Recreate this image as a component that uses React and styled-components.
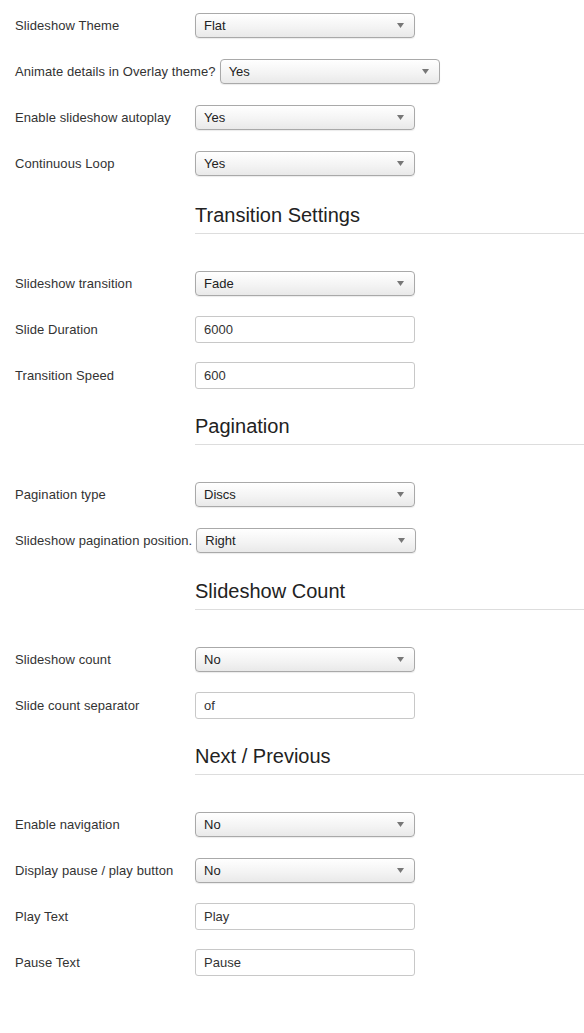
import styled, { createGlobalStyle } from "styled-components";

const GlobalStyle = createGlobalStyle`
  html, body {
    margin: 0;
    padding: 0;
    background: #fff;
  }
  body {
    font-family: "Liberation Sans", Arial, sans-serif;
    font-size: 13px;
    color: #333;
  }
`;

const Page = styled.div`
  padding: 2px 0 0 15px;
  min-height: 1031px;
`;

const Section = styled.section`
  margin-top: ${(p) => p.$offset || 0}px;
`;

const Row = styled.div`
  display: flex;
  align-items: center;
  gap: 4px;
  height: 46px;
`;

const Label = styled.label`
  min-width: 176px;
  font-size: 13px;
  letter-spacing: 0.08px;
  color: #333;
  white-space: nowrap;
`;

const SelectBox = styled.div`
  box-sizing: border-box;
  width: 220px;
  height: 25px;
  display: flex;
  align-items: center;
  justify-content: space-between;
  padding: 0 10px 0 8px;
  border: 1px solid #a9a9a9;
  border-radius: 4px;
  background: linear-gradient(#ffffff, #f3f3f3 60%, #e9e9e9);
  box-shadow: 0 1px 1px rgba(0, 0, 0, 0.08);
  color: #222;
  font-size: 13px;
`;

const TextInput = styled.input`
  box-sizing: border-box;
  width: 220px;
  height: 27px;
  padding: 0 8px;
  border: 1px solid #c8c8c8;
  border-radius: 3px;
  background: #fff;
  font-family: "Liberation Sans", Arial, sans-serif;
  font-size: 13px;
  color: #333;
  outline: none;
`;

const Heading = styled.h3`
  margin: 0 0 26px 180px;
  padding: 17px 0 6px;
  font-size: 20px;
  line-height: 23px;
  font-weight: normal;
  color: #222;
  border-bottom: 1px solid #dddddd;
`;

function Arrow() {
  return (
    <svg width="7" height="5" viewBox="0 0 7 5">
      <path d="M0 0 L7 0 L3.5 5 Z" fill="#777" />
    </svg>
  );
}

function Select({ value }) {
  return (
    <SelectBox>
      <span>{value}</span>
      <Arrow />
    </SelectBox>
  );
}

const sections = [
  {
    rows: [
      ["Slideshow Theme", "select", "Flat"],
      ["Animate details in Overlay theme?", "select", "Yes"],
      ["Enable slideshow autoplay", "select", "Yes"],
      ["Continuous Loop", "select", "Yes"],
    ],
  },
  {
    title: "Transition Settings",
    offset: 1,
    rows: [
      ["Slideshow transition", "select", "Fade"],
      ["Slide Duration", "text", "6000"],
      ["Transition Speed", "text", "600"],
    ],
  },
  {
    title: "Pagination",
    rows: [
      ["Pagination type", "select", "Discs"],
      ["Slideshow pagination position.", "select", "Right"],
    ],
  },
  {
    title: "Slideshow Count",
    rows: [
      ["Slideshow count", "select", "No"],
      ["Slide count separator", "text", "of"],
    ],
  },
  {
    title: "Next / Previous",
    rows: [
      ["Enable navigation", "select", "No"],
      ["Display pause / play button", "select", "No"],
      ["Play Text", "text", "Play"],
      ["Pause Text", "text", "Pause"],
    ],
  },
];

export default function App() {
  return (
    <>
      <GlobalStyle />
      <Page>
        {sections.map((s, i) => (
          <Section key={i} $offset={s.offset}>
            {s.title && <Heading>{s.title}</Heading>}
            {s.rows.map(([label, type, value]) => (
              <Row key={label}>
                <Label>{label}</Label>
                {type === "select" ? (
                  <Select value={value} />
                ) : (
                  <TextInput type="text" defaultValue={value} />
                )}
              </Row>
            ))}
          </Section>
        ))}
      </Page>
    </>
  );
}
